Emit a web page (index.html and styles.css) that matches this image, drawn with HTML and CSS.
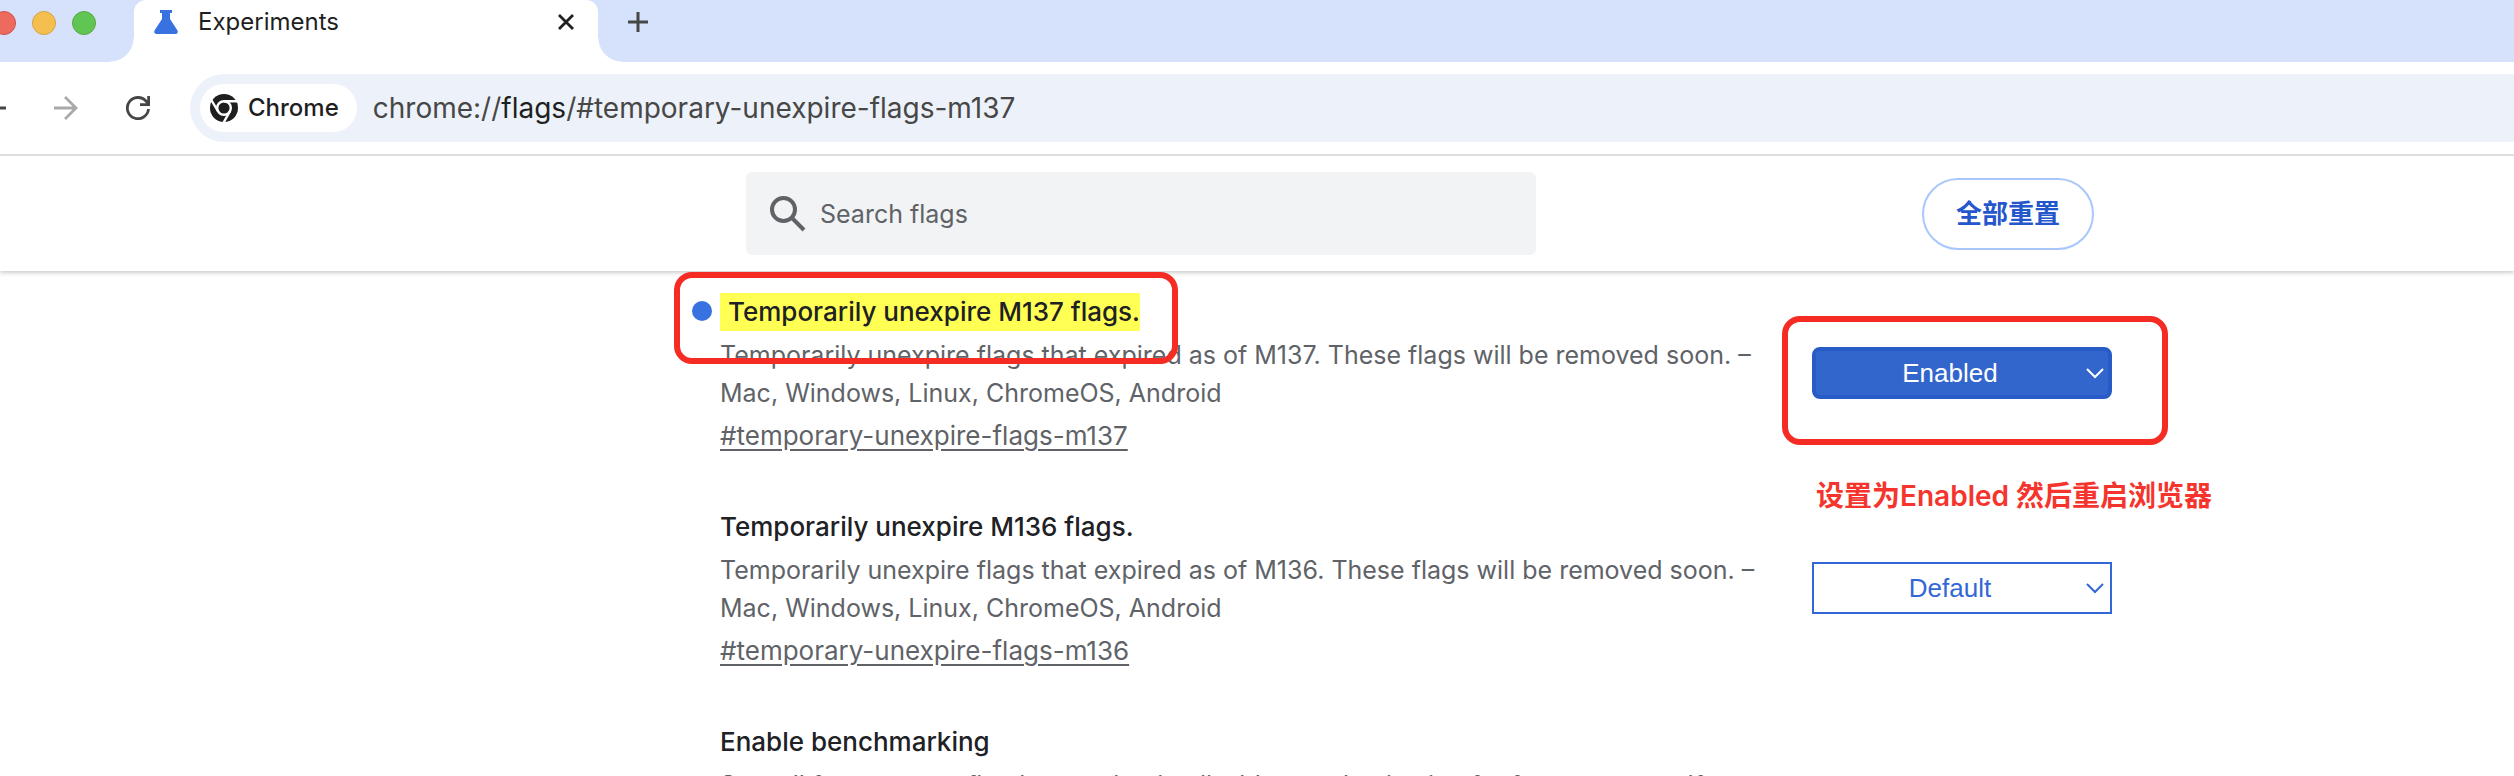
FILE: index.html
```html
<!DOCTYPE html>
<html lang="en">
<head>
    <meta charset="utf-8">
    <title>Experiments</title>
    <link rel="stylesheet" href="styles.css">
</head>
<body>
    <div class="tabstrip">
        <div class="lights">
            <span class="light red"></span>
            <span class="light yellow"></span>
            <span class="light green"></span>
        </div>
        <div class="tab">
            <svg class="flask" width="24" height="24" viewBox="0 0 24 24"><path fill="#3871e0" d="M6 0h12v3h-2v6l7.500 11.500q1 3.500-2 3.500H2.500q-3 0-2-3.500L8 9V3H6z"/></svg>
            <span class="tab-title">Experiments</span>
            <button class="icon-btn" aria-label="Close tab">
                <svg width="16" height="16" viewBox="0 0 16 16"><path stroke="#1f1f1f" stroke-width="2.800" d="M1 1l14 14M15 1L1 15"/></svg>
            </button>
        </div>
        <button class="icon-btn new-tab" aria-label="New tab">
            <svg width="20" height="20" viewBox="0 0 20 20"><path stroke="#454746" stroke-width="3" d="M10 0v20M0 10h20"/></svg>
        </button>
    </div>
    <div class="toolbar">
        <button class="icon-btn back" aria-label="Back">
            <svg width="24" height="24" viewBox="0 0 24 24"><path fill="none" stroke="#454746" stroke-width="2.800" d="M24 12H2M12 1L1 12l11 11"/></svg>
        </button>
        <button class="icon-btn forward" aria-label="Forward">
            <svg width="24" height="24" viewBox="0 0 24 24"><path fill="none" stroke="#a9a9a9" stroke-width="2.800" d="M0 12h22M11 1l11 11-11 11"/></svg>
        </button>
        <button class="icon-btn reload" aria-label="Reload">
            <svg width="24" height="24" viewBox="0 0 24 24"><path fill="none" stroke="#454746" stroke-width="2.800" d="M22.500 13A10.600 10.600 0 1 1 20 5.200L22.500 8M22.600 0v8.600H14"/></svg>
        </button>
        <div class="omnibox">
            <span class="chip">
                <svg width="28" height="28" viewBox="0 0 28 28">
                    <circle cx="14" cy="14" r="14" fill="#1f1f1f"/>
                    <circle cx="14" cy="14" r="6.800" fill="none" stroke="#fff" stroke-width="2.400"/>
                    <path fill="none" stroke="#fff" stroke-width="2.400" d="M14 7.200h13M8.100 17.400L1.300 6M19.900 17.400L13.600 28.500"/>
                </svg>
                Chrome
            </span>
            <span class="url">chrome://<b>flags</b>/#temporary-unexpire-flags-m137</span>
        </div>
    </div>
    <header class="page-header">
        <label class="search">
            <svg width="36" height="36" viewBox="0 0 36 36"><path fill="none" stroke="#5f6368" stroke-width="4" d="M25 13.500a11.500 11.500 0 1 1-23 0 11.500 11.500 0 0 1 23 0zM21.500 21.500L34 34"/></svg>
            <input type="text" placeholder="Search flags" aria-label="Search flags">
        </label>
        <button class="reset">全部重置</button>
    </header>
    <main class="flags">
        <section class="flag">
            <div class="info">
                <h3 class="changed"><mark>Temporarily unexpire M137 flags.</mark></h3>
                <p>Temporarily unexpire flags that expired as of M137. These flags will be removed soon. – Mac, Windows, Linux, ChromeOS, Android</p>
                <a href="#temporary-unexpire-flags-m137">#temporary-unexpire-flags-m137</a>
                <span class="outline outline-title"></span>
            </div>
            <div class="control">
                <div class="picker enabled">
                    <select aria-label="Temporarily unexpire M137 flags">
                        <option>Default</option>
                        <option selected>Enabled</option>
                        <option>Disabled</option>
                    </select>
                    <svg class="arrow" width="18" height="11" viewBox="0 0 18 11"><path fill="none" stroke="#fff" stroke-width="2" d="M1 1l8 8 8-8"/></svg>
                </div>
                <span class="outline outline-select"></span>
                <span class="note">设置为Enabled 然后重启浏览器</span>
            </div>
        </section>
        <section class="flag">
            <div class="info">
                <h3>Temporarily unexpire M136 flags.</h3>
                <p>Temporarily unexpire flags that expired as of M136. These flags will be removed soon. – Mac, Windows, Linux, ChromeOS, Android</p>
                <a href="#temporary-unexpire-flags-m136">#temporary-unexpire-flags-m136</a>
            </div>
            <div class="control">
                <div class="picker">
                    <select aria-label="Temporarily unexpire M136 flags">
                        <option selected>Default</option>
                        <option>Enabled</option>
                        <option>Disabled</option>
                    </select>
                    <svg class="arrow" width="18" height="11" viewBox="0 0 18 11"><path fill="none" stroke="#3367d6" stroke-width="2" d="M1 1l8 8 8-8"/></svg>
                </div>
            </div>
        </section>
        <section class="flag">
            <div class="info">
                <h3>Enable benchmarking</h3>
                <p>Sets all features to a fixed state; that is, disables randomization for feature states. If</p>
            </div>
        </section>
    </main>
</body>
</html>
```
FILE: styles.css
```css
* {
    box-sizing: border-box;
}
body {
    margin: 0;
    height: 100vh;
    overflow: hidden;
    background-color: #fff;
    color: #202124;
    font-family: Inter, "Noto Sans CJK SC", sans-serif;
    font-size: 25px;
    line-height: 38px;
}
button {
    font: inherit;
    cursor: pointer;
}
svg {
    display: block;
    flex: none;
}
.icon-btn {
    padding: 0;
    border: 0;
    background: none;
}

/* tab strip */
.tabstrip {
    display: flex;
    height: 62px;
    background-color: #d6e1fb;
}
.lights {
    display: flex;
    gap: 16px;
    width: 134px;
    margin-left: -8px;
    padding-top: 11px;
}
.light {
    width: 24px;
    height: 24px;
    border: 1px solid;
    border-radius: 50%;
}
.red {
    background-color: #ed6a5e;
    border-color: #ce5347;
}
.yellow {
    background-color: #f5bf4f;
    border-color: #d6a243;
}
.green {
    background-color: #61c554;
    border-color: #58a942;
}
.tab {
    position: relative;
    display: flex;
    align-items: flex-start;
    width: 464px;
    margin-left: 8px;
    padding: 10px 24px 0 20px;
    background-color: #fff;
    border-radius: 12px 12px 0 0;
}
.tab::before,
.tab::after {
    content: "";
    position: absolute;
    bottom: 0;
    width: 24px;
    height: 24px;
}
.tab::before {
    right: 100%;
    background: radial-gradient(circle at 0 0, transparent 23px, #fff 24px);
}
.tab::after {
    left: 100%;
    background: radial-gradient(circle at 100% 0, transparent 23px, #fff 24px);
}
.tab-title {
    flex: 1;
    margin-left: 20px;
    font-size: 24px;
    line-height: 24px;
    color: #1f1f1f;
}
.tab .icon-btn {
    padding: 4px 0;
}
.new-tab {
    height: 44px;
    margin-left: 30px;
}

/* toolbar */
.toolbar {
    display: flex;
    align-items: center;
    padding: 12px 0;
    border-bottom: 2px solid #e1e1e1;
}
.back {
    margin-left: -18px;
}
.forward {
    margin-left: 48px;
}
.reload {
    margin-left: 48px;
}
.omnibox {
    display: flex;
    flex: 1;
    align-items: center;
    height: 68px;
    margin-left: 40px;
    padding-left: 10px;
    border-radius: 34px 0 0 34px;
    background-color: #edf2fa;
}
.chip {
    display: flex;
    align-items: center;
    gap: 10px;
    height: 48px;
    padding: 0 18px 0 10px;
    border-radius: 24px;
    background-color: #fff;
    color: #1f1f1f;
    font-size: 24px;
    font-weight: 500;
}
.url {
    margin-left: 16px;
    color: #474747;
    font-size: 28px;
}
.url b {
    color: #1f1f1f;
    font-weight: 400;
}

/* search header */
.page-header {
    display: flex;
    align-items: center;
    justify-content: space-between;
    padding: 16px 420px 16px 746px;
    box-shadow: 0 2px 4px rgba(0, 0, 0, 0.2);
}
.search {
    display: flex;
    align-items: center;
    gap: 14px;
    width: 790px;
    height: 83px;
    padding-left: 24px;
    border-radius: 6px;
    background-color: #f1f3f4;
}
.search input {
    flex: 1;
    padding: 0;
    border: 0;
    outline: 0;
    background: none;
    font: inherit;
}
.search input::placeholder {
    color: #5f6368;
    opacity: 1;
}
.reset {
    width: 172px;
    height: 72px;
    padding: 0;
    border: 2px solid #a8c7fa;
    border-radius: 36px;
    background-color: #fff;
    color: #2456cc;
    font-size: 26px;
    font-weight: 700;
}

/* flag list */
.flags {
    padding: 0 402px 0 720px;
}
.flag {
    display: flex;
    gap: 18px;
    min-height: 215px;
    padding-top: 22px;
}
.info {
    position: relative;
    flex: 1;
}
.info h3 {
    position: relative;
    margin: 0;
    font-size: 26px;
    font-weight: 500;
    line-height: 38px;
}
.info p {
    margin: 5px 0;
    color: #5f6368;
}
.info a {
    color: #5f6368;
    font-size: 26px;
    text-underline-offset: 4px;
}
.info mark {
    display: inline-block;
    padding-left: 8px;
    background-color: #ffff54;
    color: inherit;
}
.changed::before {
    content: "";
    position: absolute;
    top: 8px;
    right: 100%;
    width: 20px;
    height: 20px;
    margin-right: 8px;
    border-radius: 50%;
    background-color: #3871e0;
}
.control {
    position: relative;
    width: 300px;
    padding-top: 54px;
}
.picker {
    position: relative;
}
.picker select {
    display: block;
    width: 100%;
    height: 52px;
    padding: 0 24px 0 0;
    border: 2px solid #3367d6;
    border-radius: 0;
    appearance: none;
    background-color: #fff;
    color: #3367d6;
    font: 26px "Liberation Sans", Arial, sans-serif;
    text-align: center;
    text-align-last: center;
}
.enabled select {
    border: 4px solid #285bc6;
    border-radius: 8px;
    background-color: #3266cd;
    color: #fff;
}
.arrow {
    position: absolute;
    top: 21px;
    right: 8px;
    pointer-events: none;
}

/* red annotations */
.outline {
    position: absolute;
    border: 6px solid #f42c24;
    border-radius: 18px;
    pointer-events: none;
}
.outline-title {
    top: -21px;
    left: -46px;
    width: 504px;
    height: 92px;
}
.outline-select {
    top: 23px;
    left: -30px;
    width: 386px;
    height: 129px;
}
.note {
    position: absolute;
    top: 184px;
    left: 4px;
    color: #f5352d;
    font-size: 28px;
    font-weight: 600;
    white-space: nowrap;
}
```
